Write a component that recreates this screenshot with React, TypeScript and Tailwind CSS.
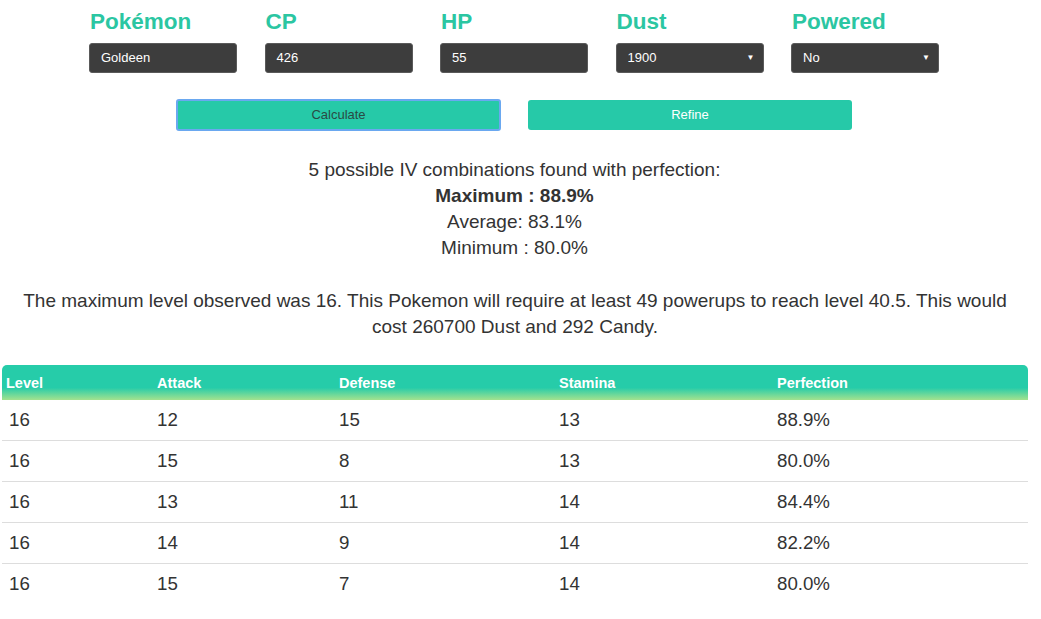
import React from "react";

const FIELDS = [
  { label: "Pokémon", value: "Goldeen", select: false },
  { label: "CP", value: "426", select: false },
  { label: "HP", value: "55", select: false },
  { label: "Dust", value: "1900", select: true },
  { label: "Powered", value: "No", select: true },
];

const ROWS = [
  ["16", "12", "15", "13", "88.9%"],
  ["16", "15", "8", "13", "80.0%"],
  ["16", "13", "11", "14", "84.4%"],
  ["16", "14", "9", "14", "82.2%"],
  ["16", "15", "7", "14", "80.0%"],
];

const COL_WIDTHS = ["w-[151px]", "w-[182px]", "w-[220px]", "w-[218px]", "w-auto"];

export default function App() {
  return (
    <div className="w-[1041px] h-[619px] bg-white text-[#333] font-['Liberation_Sans',Arial,sans-serif] overflow-hidden">
      {/* inputs */}
      <div className="flex pl-[89px] pt-[9px]">
        {FIELDS.map((f) => (
          <div key={f.label} className="w-[175.5px]">
            <div className="text-[22.5px] leading-[26px] font-bold text-[#2bc6a2] pl-px">{f.label}</div>
            <div className="mt-[8px] w-[148px] h-[30px] bg-[#3d3d3d] rounded-[3px] border border-[#5a5a5a] flex items-center justify-between pl-[11px] pr-[8px] text-white text-[13px]">
              <span>{f.value}</span>
              {f.select && <span className="text-[8px] leading-none">▼</span>}
            </div>
          </div>
        ))}
      </div>

      {/* buttons */}
      <div className="flex pl-[176px] gap-[27px] mt-[26px]">
        <button className="w-[325px] h-[32px] bg-[#26c9a8] rounded-[3px] border-2 border-[#6aa8f0] text-[#2a4a44] text-[13px]">
          Calculate
        </button>
        <button className="w-[324px] h-[30px] mt-px bg-[#26c9a8] rounded-[3px] text-white text-[13px]">
          Refine
        </button>
      </div>

      {/* summary */}
      <div className="mt-[26px] text-center text-[19px] leading-[26px] pr-[12px]">
        <div>5 possible IV combinations found with perfection:</div>
        <div className="font-bold">Maximum : 88.9%</div>
        <div>Average: 83.1%</div>
        <div>Minimum : 80.0%</div>
      </div>

      <div className="mt-[27px] ml-[15px] w-[1000px] text-center text-[19px] leading-[26px]">
        The maximum level observed was 16. This Pokemon will require at least 49 powerups to reach level 40.5. This would
        cost 260700 Dust and 292 Candy.
      </div>

      {/* table */}
      <div className="ml-[2px] w-[1026px] mt-[25px]">
        <div className="flex h-[35px] items-center rounded-t-[5px] bg-[linear-gradient(to_bottom,#26cca9_0%,#26cca9_65%,#a4e28e_100%)] text-white text-[14.5px] font-bold pl-[4px] pt-[2px]">
          {["Level", "Attack", "Defense", "Stamina", "Perfection"].map((h, i) => (
            <div key={h} className={COL_WIDTHS[i]}>{h}</div>
          ))}
        </div>
        {ROWS.map((r, ri) => (
          <div
            key={ri}
            className={`flex h-[41px] items-center text-[18.7px] pl-[4px] ${ri < ROWS.length - 1 ? "border-b border-[#dddddd]" : ""}`}
          >
            {r.map((c, i) => (
              <div key={i} className={`${COL_WIDTHS[i]} ${i === 0 ? "pl-[3px]" : ""}`}>{c}</div>
            ))}
          </div>
        ))}
      </div>
    </div>
  );
}
